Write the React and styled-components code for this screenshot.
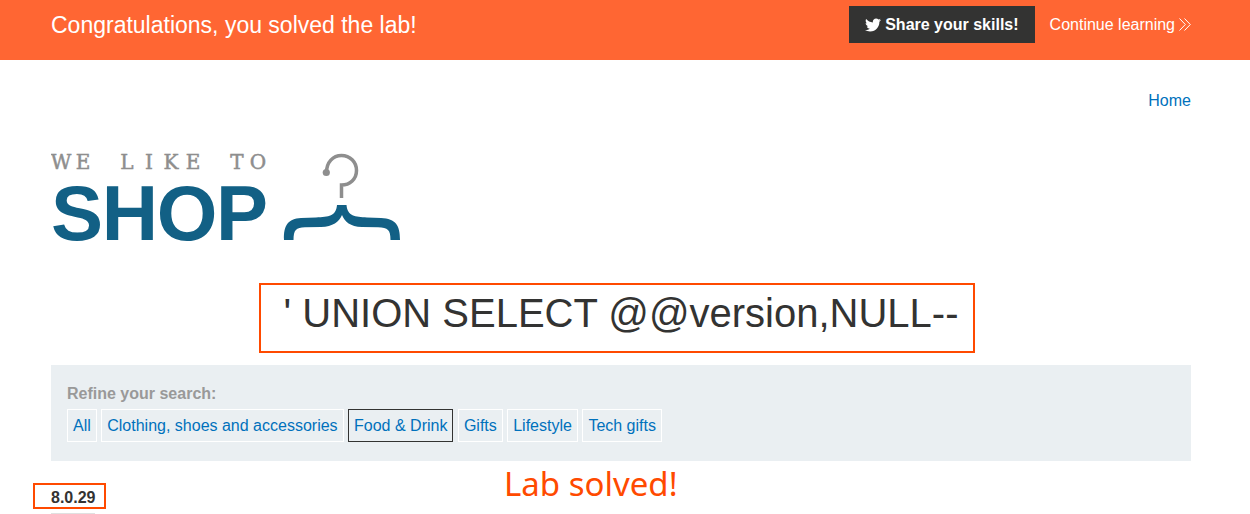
import React from "react";
import styled, { createGlobalStyle } from "styled-components";
import { FaTwitter } from "react-icons/fa";

const GlobalStyle = createGlobalStyle`
  * { box-sizing: border-box; }
  body {
    margin: 0;
    background: #fff;
    color: #333332;
    font: 16px/24px "Liberation Sans", Arial, sans-serif;
  }
`;

const Container = styled.div`
  padding: 0 59px 0 51px;
`;

const Banner = styled.header`
  background: #ff6633;
  color: #fff;
`;

const BannerRow = styled(Container)`
  display: flex;
  align-items: flex-start;
  justify-content: space-between;
  min-height: 60px;
  padding-top: 6px;
`;

const BannerTitle = styled.p`
  margin: 0;
  font-size: 23px;
  line-height: 38px;
`;

const BannerActions = styled.div`
  display: flex;
  align-items: center;
  gap: 15px;
`;

const ShareButton = styled.button`
  display: flex;
  align-items: center;
  gap: 4px;
  height: 37px;
  padding: 0 16px;
  border: 0;
  background: #333332;
  color: #fff;
  font: bold 16px/24px "Liberation Sans", Arial, sans-serif;
`;

const ContinueLink = styled.a`
  display: flex;
  align-items: center;
  gap: 4px;
  color: #fff;
  text-decoration: none;
`;

const TopNav = styled.nav`
  display: flex;
  justify-content: flex-end;
  padding-top: 29px;
`;

const NavLink = styled.a`
  color: #0071bc;
  text-decoration: none;
`;

const Logo = styled.svg`
  display: block;
  margin-top: 37px;
`;

const Word = styled.text`
  font-family: "Liberation Sans", Arial, sans-serif;
  font-size: 78px;
  font-weight: bold;
  text-anchor: middle;
  fill: #126085;
`;

const Tagline = styled.text`
  font-family: "DejaVu Serif", serif;
  font-size: 20px;
  text-anchor: middle;
  fill: #8e8e8e;
  stroke: #8e8e8e;
  stroke-width: 0.5px;
`;

const HeadingRow = styled.div`
  display: flex;
  justify-content: center;
  margin-top: 21px;
`;

const Marked = styled.span`
  position: relative;
  &::after {
    content: "";
    position: absolute;
    inset: ${(p) => p.$inset};
    border: 2px solid #ff4a00;
    pointer-events: none;
  }
`;

const Heading = styled.h1`
  margin: 0;
  font-size: 40px;
  font-weight: normal;
  line-height: 60px;
  white-space: nowrap;
`;

const HeadingMark = styled(Marked)`
  display: block;
`;

const Filters = styled.section`
  margin-top: 22px;
  padding: 17px 16px 19px;
  background: #eaeff2;
`;

const FilterTitle = styled.span`
  display: block;
  margin-bottom: 3px;
  color: #999;
  font-weight: bold;
`;

const FilterLink = styled.a`
  display: inline-block;
  padding: 4px 5px;
  border: 1px solid ${(p) => (p.$active ? "#333332" : "#fff")};
  color: #0071bc;
  line-height: 23px;
  text-decoration: none;
`;

const Results = styled.div`
  position: relative;
  padding-top: 25px;
`;

const ResultTable = styled.table`
  border-collapse: collapse;

  th {
    padding: 0 0 3px;
    border-bottom: 1px solid #e0e0e0;
    text-align: left;
  }
`;

const Note = styled.p`
  position: absolute;
  top: 0;
  left: 453px;
  margin: 0;
  color: #ff4a00;
  font: 33px/46px "Noto Sans", "Open Sans", sans-serif;
  white-space: nowrap;
`;

const filters = ["All", "Clothing, shoes and accessories", "Food & Drink", "Gifts", "Lifestyle", "Tech gifts"];

function ShopLogo() {
  return (
    <Logo width="350" height="112" viewBox="0 0 350 112" role="img" aria-label="We like to shop">
      <Tagline x="10 32 54 76 98 120 142 164 186 207" y="19">WE LIKE TO</Tagline>
      <Word x="26 79 136 191" y="90">SHOP</Word>
      <path d="M275.500 22.500C275.500 12 282 5.500 290.500 5.500C299 5.500 305.500 12 305.500 20.500C305.500 29 299 35 290.500 35V48" fill="none" stroke="#8e8e8e" strokeWidth="3.500" />
      <circle cx="275.300" cy="22.500" r="3.600" fill="#8e8e8e" />
      <path d="M286 55H295.500C296.500 66 304 67 316 67.400L330 68C345 69 349 75 349 90H339.500C339.500 80 337 77.500 327 77.300L311 77C299 76.500 294 72 291 65C288 72 282 76.500 270 77L254 77.300C245 77.500 242.500 80 242.500 90H233C232.500 75 237 69 250 68L265 67.400C278 67 285 66 286 55Z" fill="#126085" />
    </Logo>
  );
}

export default function App() {
  return (
    <>
      <GlobalStyle />
      <Banner>
        <BannerRow>
          <BannerTitle>Congratulations, you solved the lab!</BannerTitle>
          <BannerActions>
            <ShareButton type="button">
              <FaTwitter size={16} aria-hidden="true" />
              Share your skills!
            </ShareButton>
            <ContinueLink href="#learn">
              Continue learning
              <svg width="12" height="13" viewBox="0 0 12 13" fill="none" stroke="#fff" strokeWidth="1" aria-hidden="true">
                <path d="M0.500 0.500L6.300 6.500L0.500 12.500M5.500 0.500L11.300 6.500L5.500 12.500" />
              </svg>
            </ContinueLink>
          </BannerActions>
        </BannerRow>
      </Banner>
      <Container as="main">
        <TopNav>
          <NavLink href="#home">Home</NavLink>
        </TopNav>
        <ShopLogo />
        <HeadingRow>
          <Heading>
            <HeadingMark $inset="0 -17px -10px -25px">' UNION SELECT @@version,NULL--</HeadingMark>
          </Heading>
        </HeadingRow>
        <Filters>
          <FilterTitle>Refine your search:</FilterTitle>
          {filters.map((name) => (
            <React.Fragment key={name}>
              <FilterLink href="#filter" $active={name === "Food & Drink"}>{name}</FilterLink>{" "}
            </React.Fragment>
          ))}
        </Filters>
        <Results>
          <ResultTable>
            <tbody>
              <tr>
                <th scope="row"><Marked $inset="-6px -11px -3px -18px">8.0.29</Marked></th>
              </tr>
            </tbody>
          </ResultTable>
          <Note>Lab solved!</Note>
        </Results>
      </Container>
    </>
  );
}
